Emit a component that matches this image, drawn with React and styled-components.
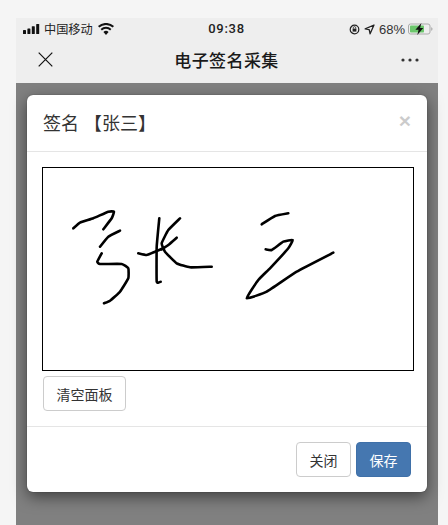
import React from "react";
import styled, { createGlobalStyle } from "styled-components";

const Global = createGlobalStyle`
  html, body { margin: 0; padding: 0; background: #f5f5f5; }
  body { font-family: "Liberation Sans", "Noto Sans CJK SC", sans-serif; overflow: hidden; }
`;
const Page = styled.div`
  width: 448px; height: 525px; padding: 18px 10px 0 16px; box-sizing: border-box; overflow: hidden;
`;
const Phone = styled.div`
  width: 422px; height: 507px; display: flex; flex-direction: column; background: #808080;
`;
const StatusBar = styled.div`
  height: 22px; flex: none; background: #eeeeee; display: grid; grid-template-columns: 1fr auto 1fr;
  align-items: center; padding: 0 5px 0 7px; color: #222; font-size: 12px;
`;
const StatusLeft = styled.div`display: flex; align-items: center; gap: 4px; font-size: 12.2px;`;
const StatusRight = styled.div`display: flex; align-items: center; justify-content: flex-end; gap: 4px; font-size: 13px; color: #333;`;
const Time = styled.div`font-family: Roboto, sans-serif; font-weight: 500; font-size: 13px; letter-spacing: 0.7px; color: #222; margin: -1px 0 0 -3px;`;
const NavBar = styled.div`
  height: 43px; flex: none; background: #eeeeee; display: grid; grid-template-columns: 60px 1fr 60px;
  align-items: center; padding-bottom: 4px; box-sizing: border-box;
`;
const NavTitle = styled.div`text-align: center; font-size: 17px; font-weight: 500; color: #1a1a1a; letter-spacing: 0.4px; margin-left: -1px;`;
const NavClose = styled.div`display: flex; padding-left: 22px;`;
const NavMore = styled.div`display: flex; justify-content: flex-end; padding-right: 19px;`;
const Modal = styled.div`
  margin: 12px 0 0 11px; width: 400px; height: 397px; box-sizing: border-box; background: #fff; border-radius: 6px;
  box-shadow: 0 0 1px rgba(0,0,0,.6), 0 5px 15px rgba(0,0,0,.5);
  display: flex; flex-direction: column;
`;
const ModalHeader = styled.div`
  height: 57px; flex: none; box-sizing: border-box; border-bottom: 1px solid #e5e5e5;
  display: flex; align-items: center; justify-content: space-between; padding: 0 16px 2px 16px;
`;
const ModalTitle = styled.div`font-size: 18px; color: #333; white-space: pre;`;
const Dismiss = styled.div`font-size: 21px; font-weight: 700; color: #000; opacity: .2; line-height: 1; margin-top: -3px;`;
const ModalBody = styled.div`
  flex: 1; padding: 15px; display: flex; flex-direction: column; align-items: flex-start;
`;
const SignPad = styled.div`
  width: 372px; height: 204px; box-sizing: border-box; border: 1px solid #000; background: #fff; flex: none;
`;
const Signature = styled.svg`display: block;`;
const Button = styled.button`
  font-family: inherit; font-size: 14px; height: 35px; box-sizing: border-box; border-radius: 4px; padding: 0;
  border: 1px solid ${p => (p.$primary ? "#3f70a8" : "#ccc")};
  background: ${p => (p.$primary ? "#4577b0" : "#fff")};
  color: ${p => (p.$primary ? "#fff" : "#333")};
  width: ${p => p.$w}px;
`;
const ClearButton = styled(Button)`margin: 5px 0 0 1px;`;
const ModalFooter = styled.div`
  height: 66px; flex: none; box-sizing: border-box; border-top: 1px solid #e5e5e5;
  display: flex; justify-content: flex-end; gap: 5px; padding: 15px 16px 0 0;
`;

const strokes = [
  [[73.3,228.3],[80,222.7],[93.3,218.3],[108.3,211.7],[114,211.7],[111.7,218.3],[103.3,229.3]],
  [[120,230.7],[108.3,236.7],[100,246.7]],
  [[101.7,253.3],[97.3,261.7],[100,264],[121.7,264],[128.3,268.3],[128.3,278.3],[120,291.7],[110,300.7],[104,303.3]],
  [[138.3,253.3],[146.7,255],[155,251.7],[163.3,248.3]],
  [[159.3,218.3],[156.7,246.7],[156.7,281.7],[160.7,281.7]],
  [[180,218.3],[168.3,230],[161.7,243.3],[165,251.7],[176.7,263.3],[190,267.3],[211.7,266.7]],
  [[176.7,237.7],[168.3,245],[161.7,249.3]],
  [[261.7,224.3],[275,216],[288.3,213.3]],
  [[265.7,249.3],[271.7,250],[283.3,241.7],[292.7,240],[288.3,248.3],[270,268.3],[258.3,280],[246.7,298.3],[266.7,291.7],[296.7,271.7],[333.3,252.7]],
];
const toPath = pts => {
  const p = pts.map(([x, y]) => [x - 43, y - 168]);
  let d = `M${p[0][0]} ${p[0][1]}`;
  for (let i = 0; i < p.length - 1; i++) {
    const a = p[Math.max(i - 1, 0)], b = p[i], c = p[i + 1], e = p[Math.min(i + 2, p.length - 1)];
    const k = 0.06;
    d += `C${b[0] + (c[0] - a[0]) * k} ${b[1] + (c[1] - a[1]) * k} ${c[0] - (e[0] - b[0]) * k} ${c[1] - (e[1] - b[1]) * k} ${c[0]} ${c[1]}`;
  }
  return d;
};

const Signal = () => (
  <svg width="17" height="10" viewBox="0 0 17 10" fill="#111">
    <rect x="0" y="6" width="3" height="4" rx=".6" /><rect x="4.4" y="4.5" width="3" height="5.5" rx=".6" />
    <rect x="8.8" y="2.2" width="3" height="7.8" rx=".6" /><rect x="13.2" y="0" width="3" height="10" rx=".6" />
  </svg>
);
const Wifi = () => (
  <svg width="16" height="12" viewBox="0 0 16 12" fill="#111" style={{ marginLeft: 1 }}>
    <path d="M8 12 5.4 9a3.8 3.8 0 0 1 5.2 0zM3.9 7.4 2.6 5.9a8 8 0 0 1 10.8 0l-1.3 1.5a6 6 0 0 0-8.2 0zM1.3 4.5 0 3a12 12 0 0 1 16 0l-1.3 1.5a10 10 0 0 0-13.4 0z" />
  </svg>
);
const RotationLock = () => (
  <svg width="11" height="11" viewBox="0 0 11 11">
    <circle cx="5.5" cy="5.5" r="4.3" fill="none" stroke="#222" strokeWidth="1.2" />
    <rect x="3.6" y="4.6" width="3.8" height="3" fill="#222" />
    <path d="M4.3 4.6V3.8a1.2 1.2 0 0 1 2.4 0v.8" fill="none" stroke="#222" strokeWidth=".8" />
  </svg>
);
const Location = () => (
  <svg width="11" height="11" viewBox="0 0 11 11" fill="none" stroke="#222" strokeWidth="1.3">
    <path d="M10 1 1.2 4.9l4 .7.9 4.2z" strokeLinejoin="round" />
  </svg>
);
const Battery = () => (
  <svg width="25" height="12" viewBox="0 0 25 12" style={{ marginLeft: -1 }}>
    <rect x=".5" y="1" width="21.5" height="10" rx="2" fill="none" stroke="#aaa" />
    <rect x="2" y="2.5" width="14" height="7" rx=".8" fill="#6cc76c" />
    <path d="M23.2 4.2c1 .3 1.3 1 1.3 1.8s-.3 1.5-1.3 1.8z" fill="#aaa" />
    <path d="M13.4 0 7.4 6.7h3.2L9.3 12l6-7h-3.2z" fill="#111" />
  </svg>
);
const CloseIcon = () => (
  <svg width="15" height="15" viewBox="0 0 15 15" stroke="#111" strokeWidth="1.2" fill="none">
    <path d="M.7.7 14.3 14.3M14.3.7 .7 14.3" />
  </svg>
);
const MoreIcon = () => (
  <svg width="18" height="4" viewBox="0 0 18 4" fill="#333">
    <circle cx="2" cy="2" r="1.6" /><circle cx="9" cy="2" r="1.6" /><circle cx="16" cy="2" r="1.6" />
  </svg>
);

export default function App() {
  return (
    <Page>
      <Global />
      <Phone>
        <StatusBar>
          <StatusLeft><Signal />中国移动<Wifi /></StatusLeft>
          <Time>09:38</Time>
          <StatusRight><RotationLock /><Location />68%<Battery /></StatusRight>
        </StatusBar>
        <NavBar>
          <NavClose><CloseIcon /></NavClose>
          <NavTitle>电子签名采集</NavTitle>
          <NavMore><MoreIcon /></NavMore>
        </NavBar>
        <Modal>
          <ModalHeader>
            <ModalTitle>签名 【张三】</ModalTitle>
            <Dismiss>×</Dismiss>
          </ModalHeader>
          <ModalBody>
            <SignPad>
              <Signature width="370" height="202" viewBox="0 0 370 202" fill="none" stroke="#000" strokeWidth="2.6" strokeLinecap="round" strokeLinejoin="round">
                {strokes.map((s, i) => <path key={i} d={toPath(s)} />)}
              </Signature>
            </SignPad>
            <ClearButton $w={83}>清空面板</ClearButton>
          </ModalBody>
          <ModalFooter>
            <Button $w={55}>关闭</Button>
            <Button $w={55} $primary>保存</Button>
          </ModalFooter>
        </Modal>
      </Phone>
    </Page>
  );
}
